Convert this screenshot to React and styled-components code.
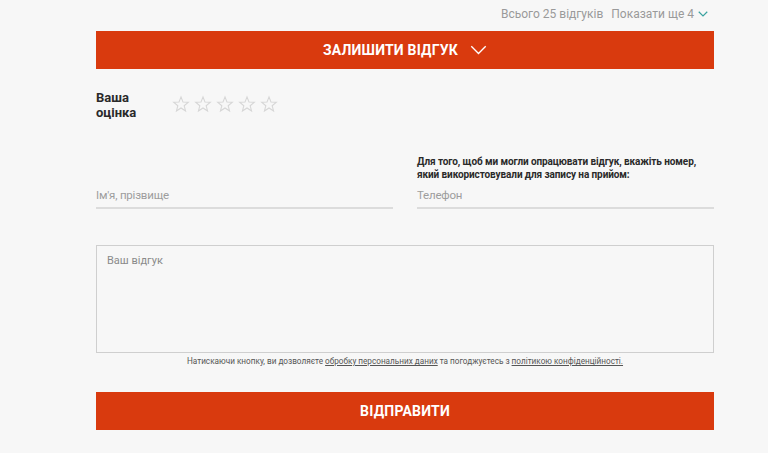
import React from "react";
import styled, { createGlobalStyle } from "styled-components";

const Global = createGlobalStyle`
  body {
    margin: 0;
    background: #f7f7f7;
    font-family: Roboto, "Liberation Sans", Arial, sans-serif;
  }
`;

const Wrapper = styled.div`
  width: 618px;
  margin: 0 0 0 96px;
  padding-top: 5px;
`;

const Summary = styled.div`
  display: flex;
  justify-content: flex-end;
  align-items: center;
  gap: 8px;
  height: 18px;
  padding-right: 6px;
  font-size: 12px;
  color: #9a9a9a;
`;

const ShowMore = styled.span`
  display: flex;
  align-items: center;
  gap: 4px;
  color: #9a9a9a;
`;

const RedButton = styled.button`
  display: flex;
  align-items: center;
  justify-content: center;
  gap: 12px;
  width: 100%;
  height: ${(p) => p.$h}px;
  margin-top: ${(p) => p.$mt}px;
  border: none;
  background: #d93a0e;
  color: #fff;
  font-family: Roboto, "Liberation Sans", Arial, sans-serif;
  font-size: 14px;
  font-weight: 700;
  letter-spacing: 0.2px;
  text-transform: uppercase;
  padding: 0;
`;

const RatingRow = styled.div`
  display: flex;
  align-items: flex-start;
  margin-top: 21px;
`;

const RatingLabel = styled.div`
  width: 76px;
  font-size: 13px;
  font-weight: 700;
  color: #2a2a2a;
  line-height: 15px;
`;

const Stars = styled.div`
  display: flex;
  gap: 4px;
  margin-top: 5px;
`;

const Fields = styled.div`
  display: grid;
  grid-template-columns: 1fr 1fr;
  column-gap: 24px;
  margin-top: 35px;
  align-items: end;
`;

const Field = styled.div`
  display: flex;
  flex-direction: column;
`;

const Hint = styled.div`
  font-size: 10px;
  font-weight: 700;
  color: #2a2a2a;
  line-height: 13px;
  white-space: nowrap;
  letter-spacing: -0.1px;
`;

const Input = styled.input`
  height: 22px;
  border: none;
  border-bottom: 2px solid #dcdcdc;
  background: transparent;
  padding: 3px 0 1px;
  font-family: Roboto, "Liberation Sans", Arial, sans-serif;
  font-size: 11.5px;
  letter-spacing: -0.2px;
  color: #333;
  outline: none;
  &::placeholder {
    color: #9d9d9d;
  }
`;

const TextArea = styled.textarea`
  display: block;
  box-sizing: border-box;
  width: 100%;
  height: 108px;
  margin-top: 36px;
  border: 1px solid #cfcfcf;
  background: #f7f7f7;
  padding: 8px 10px;
  resize: none;
  font-family: Roboto, "Liberation Sans", Arial, sans-serif;
  font-size: 11px;
  outline: none;
  &::placeholder {
    color: #8a8a8a;
  }
`;

const Consent = styled.p`
  margin: 3px 0 0;
  text-align: center;
  font-size: 8.2px;
  color: #555;
  a {
    color: #555;
    text-decoration: underline;
  }
`;

const Star = () => (
  <svg width="18" height="18" viewBox="0 0 24 24" fill="none" stroke="#d6d6d6" strokeWidth="1.4" strokeLinejoin="miter">
    <path d="M12 2.5l2.6 6.9 7.2.3-5.6 4.6 1.9 7-6.1-4-6.1 4 1.9-7-5.6-4.6 7.2-.3z" />
  </svg>
);

const Chevron = ({ size, color, width }) => (
  <svg width={size} height={size * 0.6} viewBox="0 0 20 12" fill="none" stroke={color} strokeWidth={width}>
    <path d="M1.5 1.5L10 10l8.5-8.5" />
  </svg>
);

export default function App() {
  return (
    <>
      <Global />
      <Wrapper>
        <Summary>
          <span>Всього 25 відгуків</span>
          <ShowMore>
            Показати ще 4 <Chevron size={10} color="#3aa3a0" width={2.4} />
          </ShowMore>
        </Summary>
        <RedButton $h={38} $mt={8}>
          Залишити відгук <Chevron size={17} color="#fff" width={1.6} />
        </RedButton>
        <RatingRow>
          <RatingLabel>
            Ваша
            <br />
            оцінка
          </RatingLabel>
          <Stars>
            {[0, 1, 2, 3, 4].map((i) => (
              <Star key={i} />
            ))}
          </Stars>
        </RatingRow>
        <Fields>
          <Field>
            <Input placeholder="Ім'я, прізвище" />
          </Field>
          <Field>
            <Hint>
              Для того, щоб ми могли опрацювати відгук, вкажіть номер,
              <br />
              який використовували для запису на прийом:
            </Hint>
            <Input placeholder="Телефон" />
          </Field>
        </Fields>
        <TextArea placeholder="Ваш відгук" />
        <Consent>
          Натискаючи кнопку, ви дозволяєте <a href="#">обробку персональних даних</a> та погоджуєтесь з{" "}
          <a href="#">політикою конфіденційності.</a>
        </Consent>
        <RedButton $h={38} $mt={26}>
          Відправити
        </RedButton>
      </Wrapper>
    </>
  );
}
